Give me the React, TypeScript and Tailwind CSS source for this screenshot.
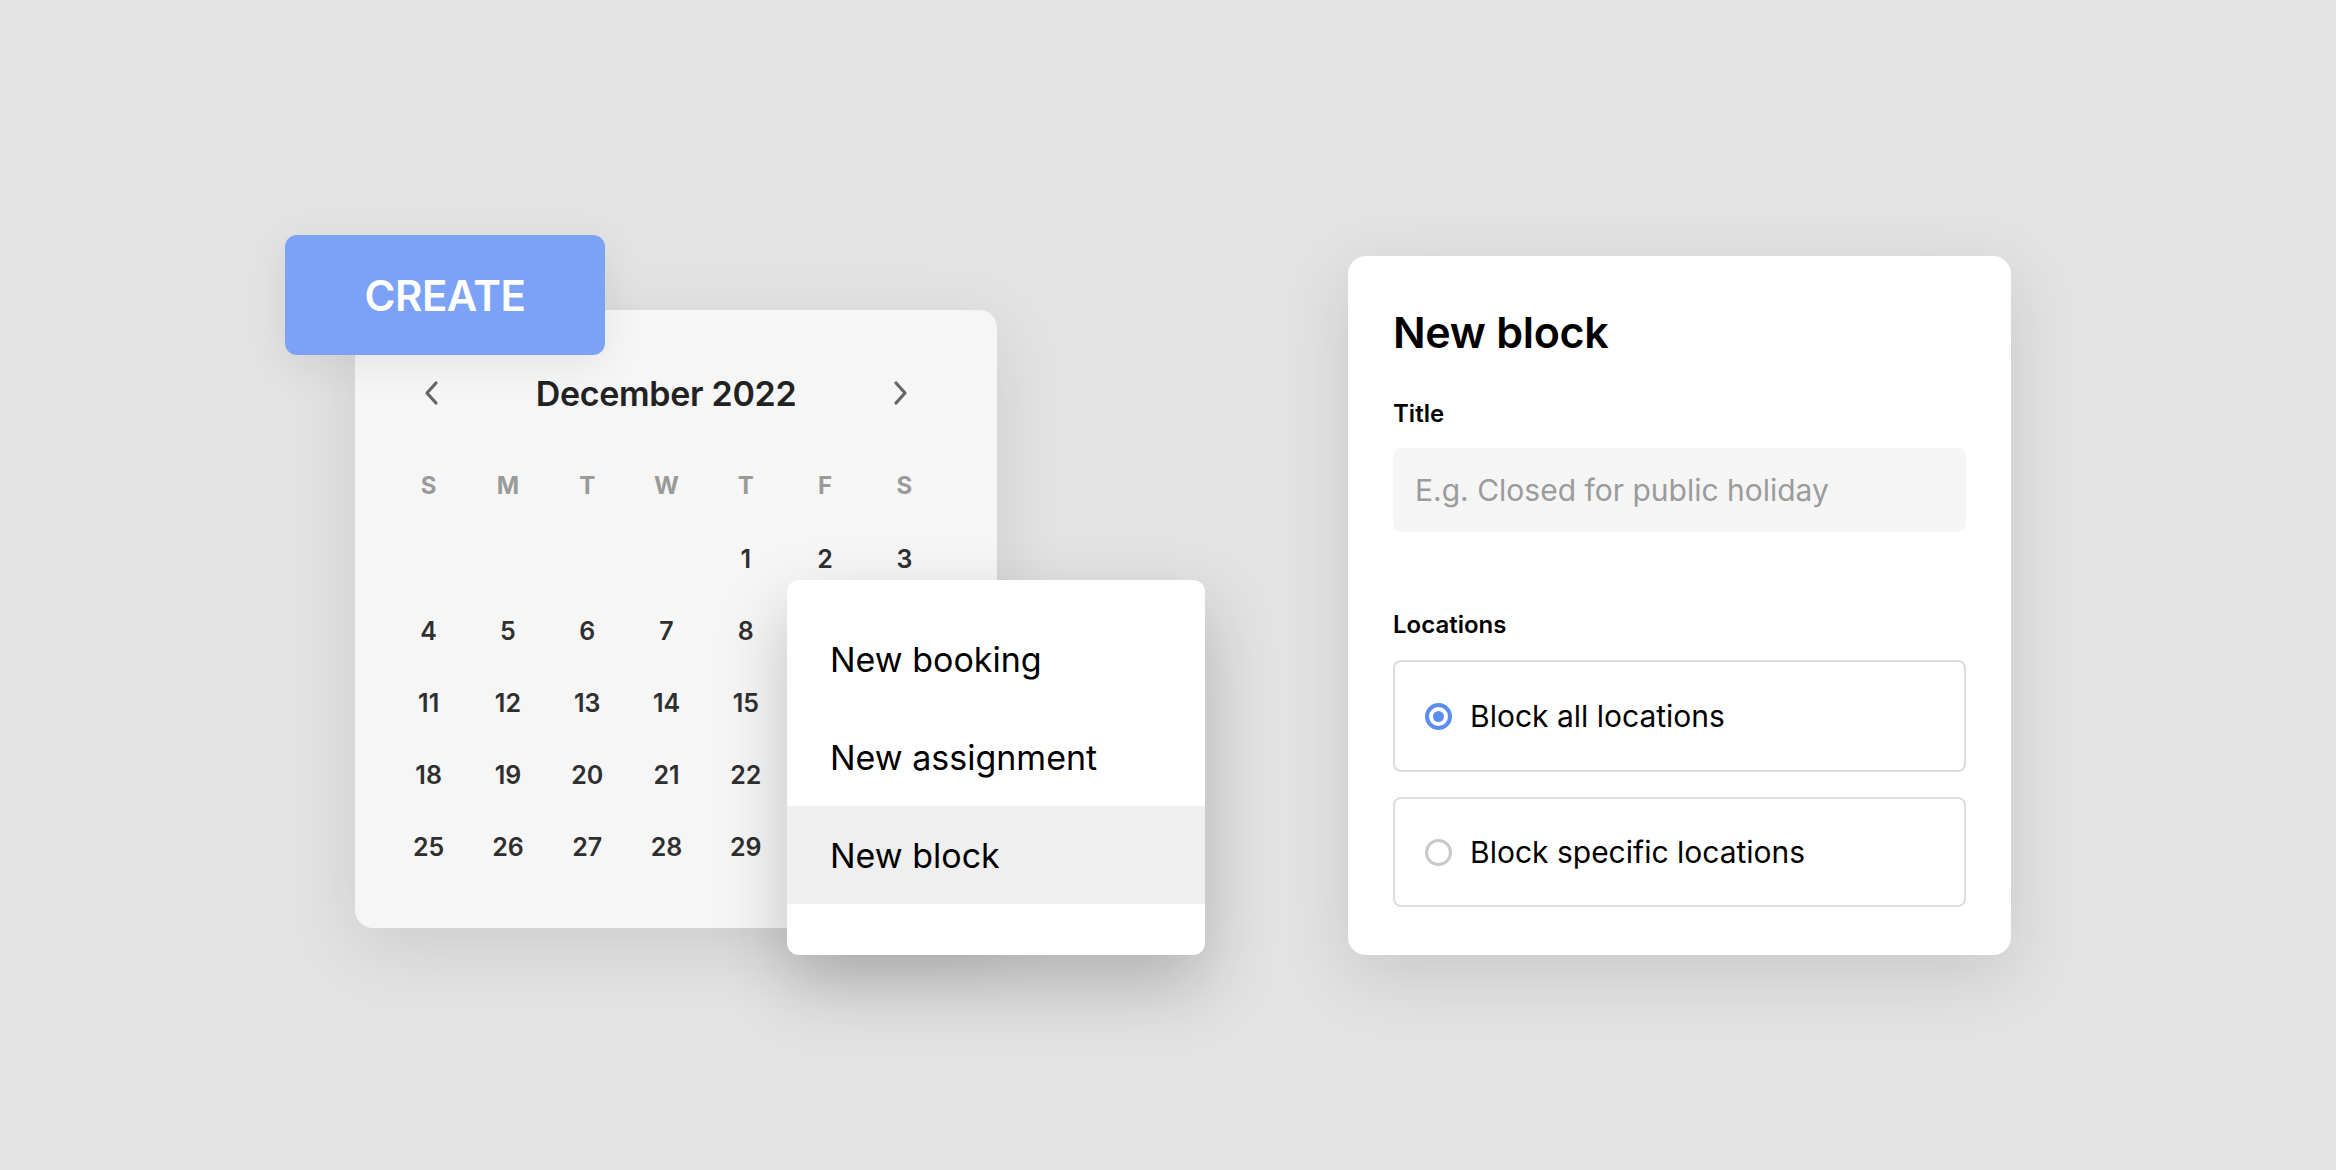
import React from 'react';

const weekdays = ['S', 'M', 'T', 'W', 'T', 'F', 'S'];
// dates hidden under the menu are left blank
const dates: (number | null)[] = [
  null, null, null, null, 1, 2, 3,
  4, 5, 6, 7, 8, null, null,
  11, 12, 13, 14, 15, null, null,
  18, 19, 20, 21, 22, null, null,
  25, 26, 27, 28, 29, null, null,
];

const Chevron: React.FC<{ dir: 'left' | 'right' }> = ({ dir }) => (
  <svg width="24" height="28" viewBox="0 0 24 28" fill="none">
    <path
      d={dir === 'left' ? 'M16 4 L7 14 L16 24' : 'M8 4 L17 14 L8 24'}
      stroke="#666"
      strokeWidth="3.2"
      strokeLinecap="round"
      strokeLinejoin="round"
    />
  </svg>
);

const Radio: React.FC<{ checked?: boolean }> = ({ checked }) =>
  checked ? (
    <span className="flex h-[27px] w-[27px] items-center justify-center rounded-full border-[4px] border-[#5b8cf0] bg-white">
      <span className="h-[11px] w-[11px] rounded-full bg-[#5b8cf0]" />
    </span>
  ) : (
    <span className="h-[27px] w-[27px] rounded-full border-[3px] border-[#c9c9c9] bg-white" />
  );

const App: React.FC = () => {
  const menu = ['New booking', 'New assignment', 'New block'];

  return (
    <div
      className="flex h-[1170px] w-full items-start bg-[#e3e3e3] text-[#111]"
      style={{ fontFamily: 'Inter, "Noto Sans", sans-serif' }}
    >
      {/* Calendar with create button and menu */}
      <div className="relative ml-[355px] mt-[310px] h-[618px] w-[642px] shrink-0 rounded-[18px] bg-[#f6f6f6] shadow-[0_20px_70px_rgba(0,0,0,0.10)]">
        <div className="ml-[65px] mt-[47px] flex h-[72px] w-[492px] items-center justify-between">
          <Chevron dir="left" />
          <span className="text-[34px] font-semibold tracking-[-0.3px] text-[#222]">December 2022</span>
          <Chevron dir="right" />
        </div>

        <div className="ml-[34px] mt-[19px] grid w-[555px] grid-cols-7">
          {weekdays.map((d, i) => (
            <div key={i} className="flex h-[76px] items-center justify-center text-[24px] font-bold text-[#9a9a9a]">
              {d}
            </div>
          ))}
          {dates.map((d, i) => (
            <div key={i} className="flex h-[72px] items-center justify-center text-[25px] font-semibold text-[#2f2f2f]">
              {d ?? ''}
            </div>
          ))}
        </div>

        {/* Create button */}
        <div className="absolute left-[-70px] top-[-75px] flex h-[120px] w-[320px] items-center justify-center rounded-[12px] bg-[#7ba2f7] shadow-[0_10px_40px_rgba(0,0,0,0.08)]">
          <span className="text-[42px] font-semibold tracking-[-0.5px] text-white">CREATE</span>
        </div>

        {/* Dropdown menu */}
        <div className="absolute left-[432px] top-[270px] flex h-[375px] w-[418px] flex-col overflow-hidden rounded-[12px] bg-white pt-[30px] shadow-[0_30px_70px_rgba(0,0,0,0.22)]">
          {menu.map((m) => (
            <div
              key={m}
              className={`flex h-[98px] items-center pl-[43px] text-[34px] text-black ${
                m === 'New block' ? 'bg-[#efefef]' : ''
              }`}
            >
              {m}
            </div>
          ))}
        </div>
      </div>

      {/* New block form */}
      <div className="ml-[351px] mt-[256px] flex w-[663px] shrink-0 flex-col rounded-[18px] bg-white px-[45px] pb-[48px] pt-[49px] shadow-[0_20px_70px_rgba(0,0,0,0.12)]">
        <h2 className="text-[43px] font-semibold leading-[54px] tracking-[-0.3px] text-black">New block</h2>
        <label className="mt-[40px] text-[24px] font-semibold leading-[30px] text-black">Title</label>
        <div className="mt-[19px] flex h-[84px] items-center rounded-[8px] bg-[#f5f5f5] pl-[22px] text-[30px] text-[#9b9b9b]">
          E.g. Closed for public holiday
        </div>
        <label className="mt-[78px] text-[24px] font-semibold leading-[30px] text-black">Locations</label>
        <div className="mt-[20px] flex h-[112px] items-center gap-[18px] rounded-[8px] border-2 border-[#dcdcdc] pl-[30px]">
          <Radio checked />
          <span className="text-[30px] text-black">Block all locations</span>
        </div>
        <div className="mt-[25px] flex h-[110px] items-center gap-[18px] rounded-[8px] border-2 border-[#dcdcdc] pl-[30px]">
          <Radio />
          <span className="text-[30px] text-black">Block specific locations</span>
        </div>
      </div>
    </div>
  );
};

export default App;
